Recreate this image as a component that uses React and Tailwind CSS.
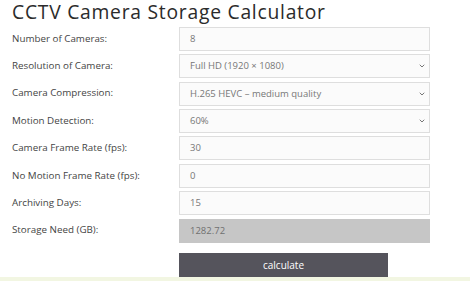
import { ChevronDown } from 'lucide-react'

const rows = [
  { label: 'Number of Cameras:', value: '8', type: 'input' },
  { label: 'Resolution of Camera:', value: 'Full HD (1920 × 1080)', type: 'select' },
  { label: 'Camera Compression:', value: 'H.265 HEVC – medium quality', type: 'select' },
  { label: 'Motion Detection:', value: '60%', type: 'select' },
  { label: 'Camera Frame Rate (fps):', value: '30', type: 'input' },
  { label: 'No Motion Frame Rate (fps):', value: '0', type: 'input' },
  { label: 'Archiving Days:', value: '15', type: 'input' },
  { label: 'Storage Need (GB):', value: '1282.72', type: 'result' },
]

const Field = ({ row }) => {
  const base = 'w-[251px] h-[24px] flex items-center justify-between pl-[10px] pr-[3px] text-[9.5px] border'
  if (row.type === 'result') {
    return (
      <div className={`${base} bg-[#c6c6c6] border-[#c6c6c6] text-[#707070]`}>
        <span>{row.value}</span>
      </div>
    )
  }
  return (
    <div className={`${base} bg-[#fbfbfb] border-[#dedede] text-[#777]`}>
      <span>{row.value}</span>
      {row.type === 'select' && <ChevronDown className="w-[8px] h-[8px] text-[#777]" strokeWidth={3} />}
    </div>
  )
}

export default function App() {
  return (
    <div className="w-[474px] h-[281px] bg-white overflow-hidden flex flex-col font-['Open_Sans',sans-serif] text-[#333]">
      <div className="pl-[12px] h-[28px] flex items-start">
        <h1 className="mt-[-1px] text-[19.3px] leading-[26px] tracking-[0.75px] text-[#2b2b2b] font-normal">
          CCTV Camera Storage Calculator
        </h1>
      </div>
      <div className="flex flex-col gap-[3.4px]">
        {rows.map((row) => (
          <div key={row.label} className="flex items-center">
            <div className="w-[179px] pl-[12px] text-[9.8px] text-[#444]">{row.label}</div>
            <Field row={row} />
          </div>
        ))}
      </div>
      <div className="pl-[179px] mt-[8px]">
        <button className="w-[209px] h-[24px] bg-[#55545c] text-white text-[10px]">calculate</button>
      </div>
      <div className="mt-auto h-[4px] w-[470px] bg-[#f2f6e2]" />
    </div>
  )
}
